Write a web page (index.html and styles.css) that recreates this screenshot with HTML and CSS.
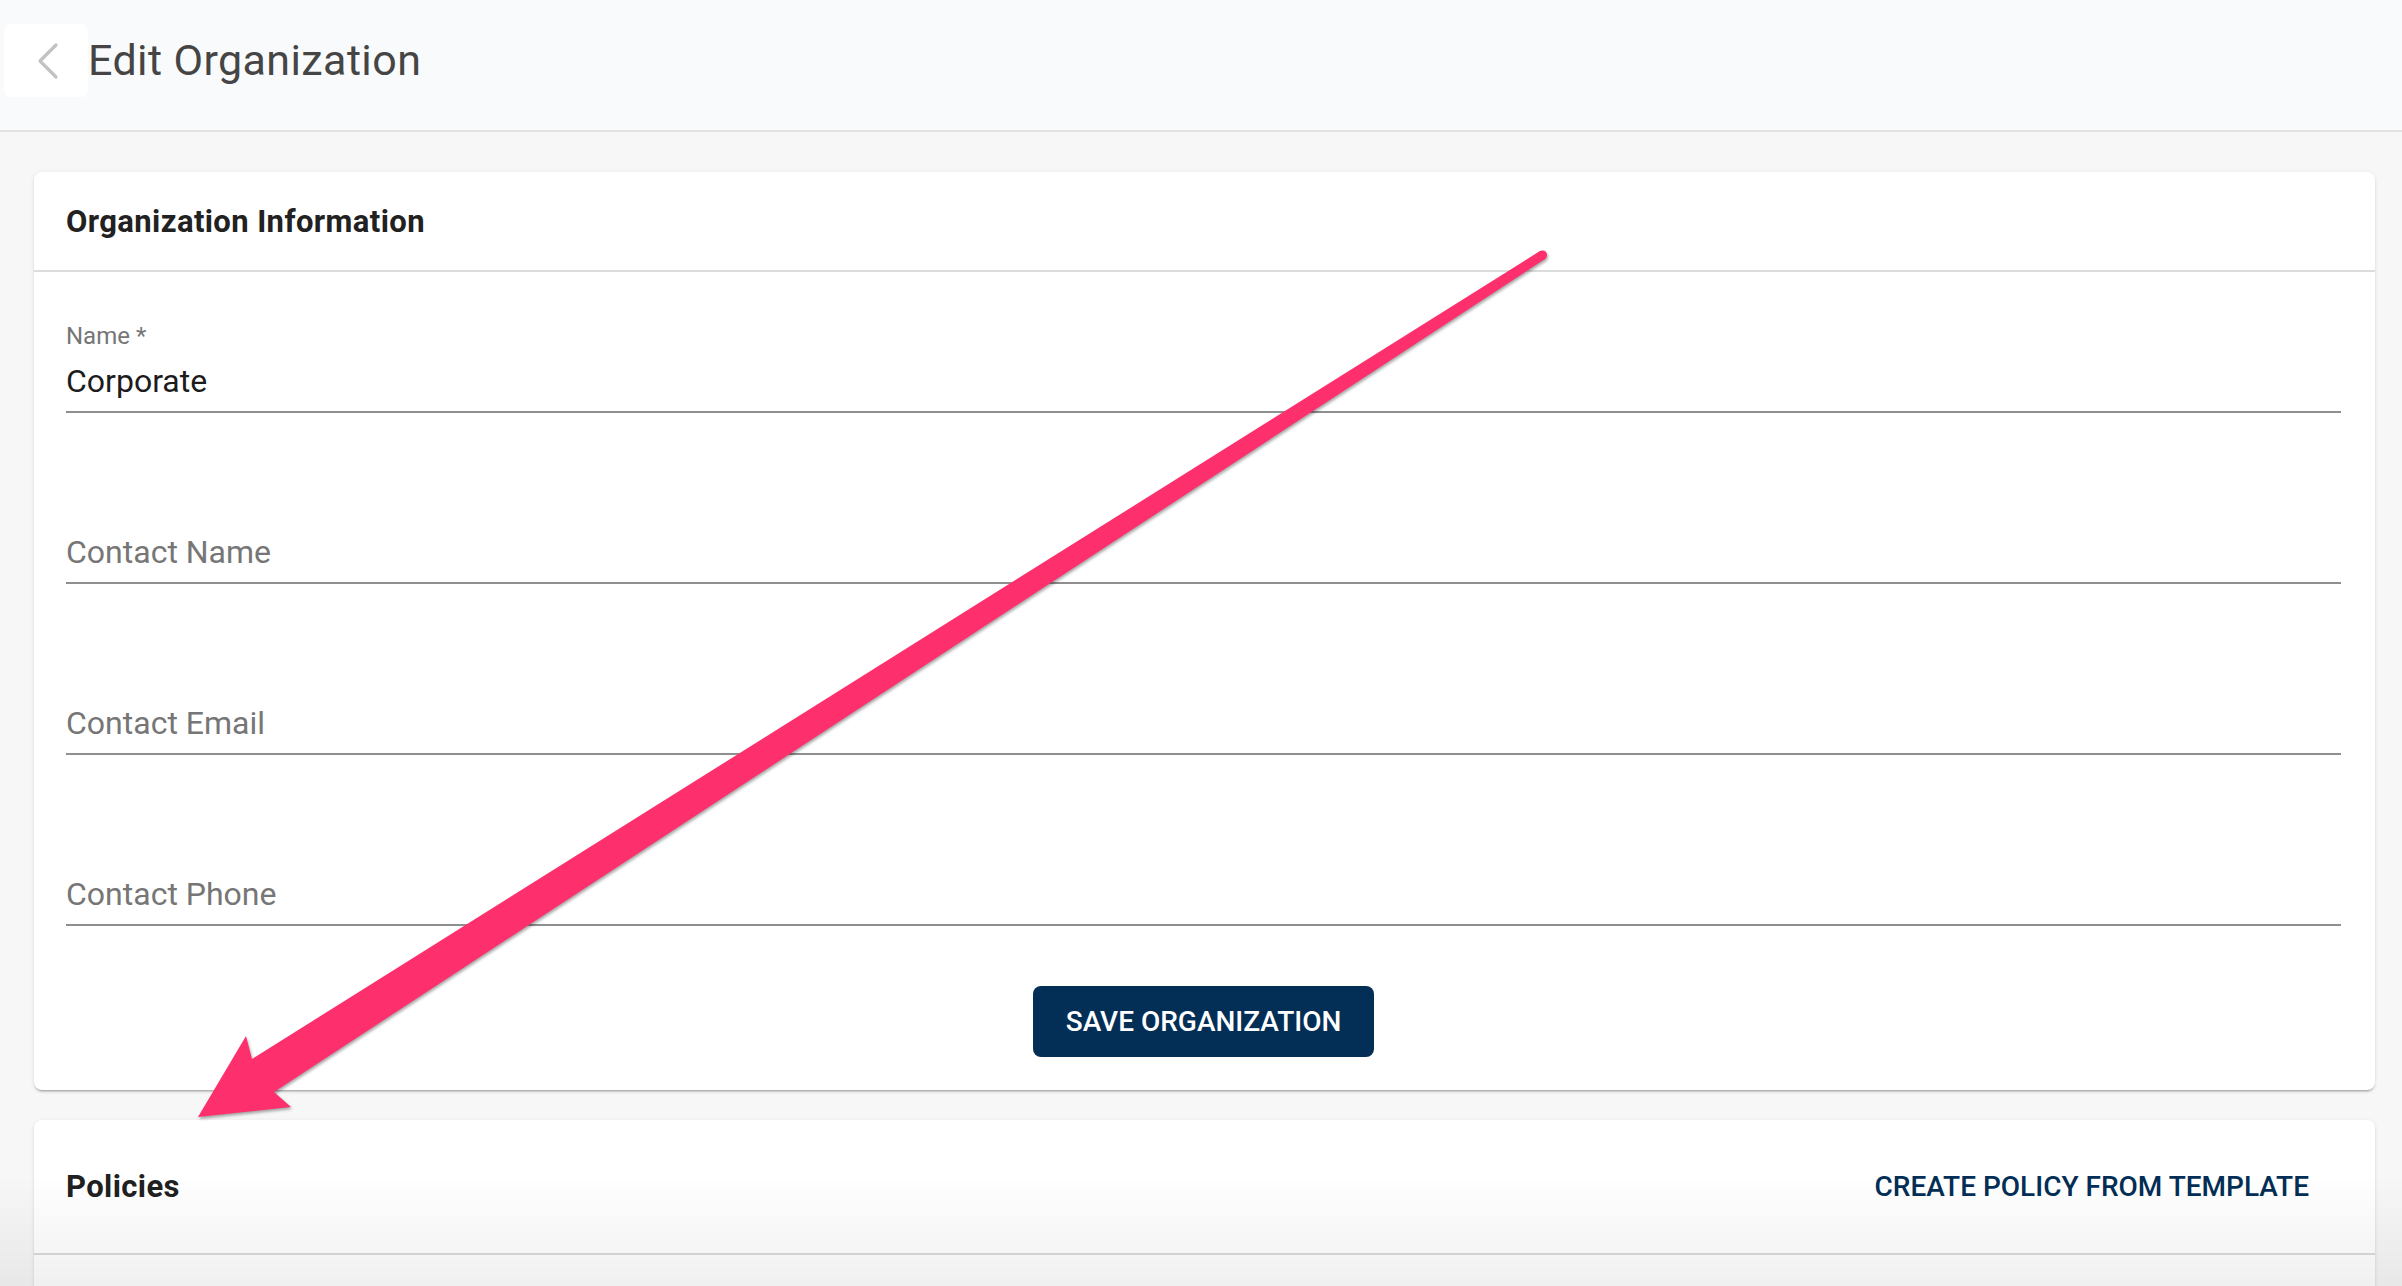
FILE: index.html
```html
<!DOCTYPE html>
<html lang="en">
<head>
  <meta charset="UTF-8" />
  <meta name="viewport" content="width=device-width, initial-scale=1.0" />
  <title>Edit Organization</title>
  <link rel="stylesheet" href="styles.css">
</head>
<body>
  <header class="topbar">
    <button class="back-btn" aria-label="Back">
      <svg width="22" height="38" viewBox="0 0 22 38">
        <polyline points="19,3 3,19 19,35" fill="none" stroke="#c2c2c2" stroke-width="3.2" stroke-linecap="round" stroke-linejoin="round"/>
      </svg>
    </button>
    <h1 class="page-title">Edit Organization</h1>
  </header>

  <main class="content">
    <section class="card">
      <div class="card-header">
        <h2>Organization Information</h2>
      </div>
      <div class="card-body">
        <div class="field">
          <div class="field-label">Name *</div>
          <div class="field-value">Corporate</div>
        </div>
        <div class="field">
          <div class="field-label"></div>
          <div class="field-value placeholder">Contact Name</div>
        </div>
        <div class="field">
          <div class="field-label"></div>
          <div class="field-value placeholder">Contact Email</div>
        </div>
        <div class="field">
          <div class="field-label"></div>
          <div class="field-value placeholder">Contact Phone</div>
        </div>
        <div class="actions">
          <button class="btn-primary">Save Organization</button>
        </div>
      </div>
    </section>

    <section class="card">
      <div class="card-header tall">
        <h2>Policies</h2>
        <button class="btn-text">Create Policy From Template</button>
      </div>
      <div class="card-body empty"></div>
    </section>
  </main>

  <!-- annotation arrow drawn over the page -->
  <svg class="annotation" viewBox="0 0 2402 1286" width="2402" height="1286">
    <path d="M1540,251 L252,1059 L246,1036 L198,1117 L291,1107 L274,1092 L1545,259 Z" fill="#fe2f6d"/>
    <circle cx="1542.5" cy="255" r="4.6" fill="#fe2f6d"/>
  </svg>
  <div class="bottom-fade"></div>
</body>
</html>
```

FILE: styles.css
```css
body {
  margin: 0;
  font-family: Roboto, "Liberation Sans", sans-serif;
  background: #f7f7f7;
  color: #212121;
  overflow: hidden;
}

.topbar {
  display: flex;
  align-items: flex-start;
  height: 106px;
  padding: 24px 0 0 4px;
  background: #f9fafb;
  border-bottom: 2px solid #e2e2e2;
}

.back-btn {
  width: 84px;
  height: 73px;
  border: none;
  border-radius: 7px;
  background: #fff;
  display: flex;
  align-items: center;
  justify-content: flex-start;
  padding: 0 0 0 33px;
}

.page-title {
  margin: 0;
  font-size: 43px;
  font-weight: 400;
  letter-spacing: 0.4px;
  line-height: 73px;
  color: #454545;
}

.content {
  padding: 40px 27px 0 34px;
}

.card {
  background: #fff;
  border-radius: 8px;
  box-shadow: 0 3px 2px -2px rgba(0,0,0,0.22), 0 2px 2px rgba(0,0,0,0.1), 0 1px 5px rgba(0,0,0,0.08);
  margin-bottom: 30px;
}

.card-header {
  display: flex;
  align-items: center;
  justify-content: space-between;
  height: 98px;
  padding: 0 50px 0 32px;
  border-bottom: 2px solid #dcdcdc;
}
.card-header.tall {
  height: 133px;
}
.card-header h2 {
  margin: 0;
  font-size: 31px;
  font-weight: 700;
  letter-spacing: 0.4px;
  color: #212121;
}

.card-body {
  padding: 50px 34px 33px 32px;
}
.card-body.empty {
  height: 80px;
  padding: 0;
}

.field {
  border-bottom: 2px solid #8f8f8f;
  padding-bottom: 11px;
}
.field + .field {
  margin-top: 80px;
}
.field-label {
  height: 28px;
  font-size: 24px;
  line-height: 28px;
  color: #767676;
  margin-bottom: 12px;
}
.field-value {
  font-size: 32px;
  line-height: 38px;
  color: #1c1c1c;
}
.field-value.placeholder {
  color: #767676;
}

.actions {
  display: flex;
  justify-content: center;
  margin-top: 60px;
}

.btn-primary {
  height: 71px;
  padding: 0 33px;
  border: none;
  border-radius: 8px;
  background: #032e56;
  color: #fff;
  font-family: Roboto, "Liberation Sans", sans-serif;
  font-size: 28px;
  font-weight: 500;
  text-transform: uppercase;
}

.btn-text {
  border: none;
  background: none;
  padding: 0 16px;
  color: #032e56;
  font-family: Roboto, "Liberation Sans", sans-serif;
  font-size: 28px;
  font-weight: 500;
  text-transform: uppercase;
}

.annotation {
  position: absolute;
  top: 0;
  left: 0;
  pointer-events: none;
  filter: drop-shadow(1px 2px 1.5px rgba(0,0,0,0.35));
}

.bottom-fade {
  position: fixed;
  left: 0;
  right: 0;
  bottom: 0;
  height: 110px;
  pointer-events: none;
  background: linear-gradient(to bottom, rgba(0,0,0,0), rgba(0,0,0,0.06));
}
```
